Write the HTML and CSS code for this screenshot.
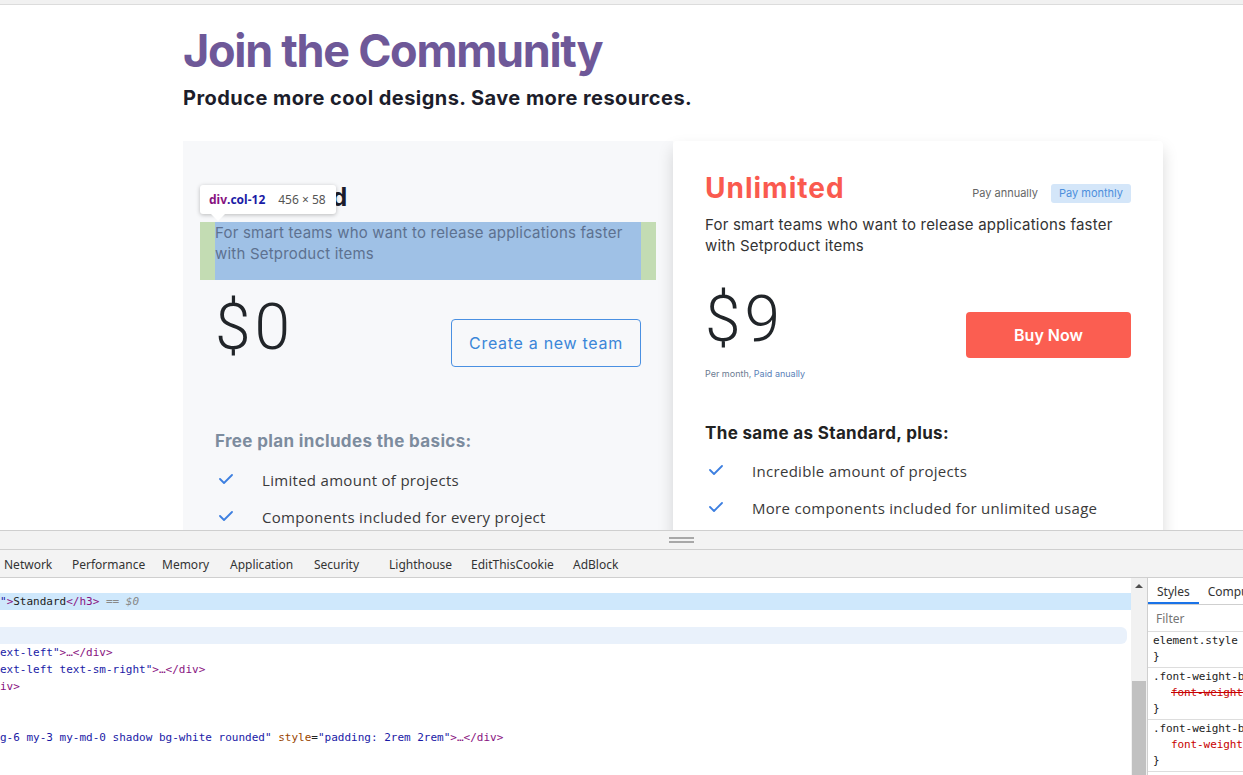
FILE: index.html
```html
<!DOCTYPE html>
<html lang="en">
<head>
<meta charset="utf-8">
<title>Join the Community</title>
<link rel="stylesheet" href="styles.css">
</head>
<body>
<div class="browser-top"></div>
<main class="page">
  <div class="container">
    <h1 class="title">Join the Community</h1>
    <h2 class="subtitle">Produce more cool designs. Save more resources.</h2>
    <div class="plans">
      <section class="plan plan-free">
        <h3 class="plan-name plan-name-std">Standard</h3>
        <div class="hl"><p class="hl-content">For smart teams who want to release applications faster with Setproduct items</p></div>
        <div class="price-row price-row-free">
          <div class="price">$0</div>
          <button class="btn-outline">Create a new team</button>
        </div>
        <h4 class="features-title features-title-muted">Free plan includes the basics:</h4>
        <ul class="features features-free">
          <li><svg class="check" viewBox="0 0 14 10" width="14" height="10"><polyline points="1,5 5,9 13,1" fill="none" stroke="#3d7fe0" stroke-width="1.8" stroke-linecap="round" stroke-linejoin="round"/></svg><span>Limited amount of projects</span></li>
          <li><svg class="check" viewBox="0 0 14 10" width="14" height="10"><polyline points="1,5 5,9 13,1" fill="none" stroke="#3d7fe0" stroke-width="1.8" stroke-linecap="round" stroke-linejoin="round"/></svg><span>Components included for every project</span></li>
        </ul>
        <div class="tooltip">
          <span class="tt-tag">div</span><span class="tt-cls">.col-12</span><span class="tt-size">456 × 58</span>
        </div>
      </section>
      <section class="plan plan-pro">
        <div class="plan-head">
          <h3 class="plan-name plan-name-pro">Unlimited</h3>
          <div class="billing">
            <span class="bill-opt">Pay annually</span>
            <span class="bill-opt bill-active">Pay monthly</span>
          </div>
        </div>
        <p class="plan-desc">For smart teams who want to release applications faster with Setproduct items</p>
        <div class="price-row price-row-pro">
          <div class="price-col">
            <div class="price">$9</div>
            <div class="price-note">Per month, <span class="note-accent">Paid anually</span></div>
          </div>
          <button class="btn-buy">Buy Now</button>
        </div>
        <h4 class="features-title features-title-dark">The same as Standard, plus:</h4>
        <ul class="features features-pro">
          <li><svg class="check" viewBox="0 0 14 10" width="14" height="10"><polyline points="1,5 5,9 13,1" fill="none" stroke="#3d7fe0" stroke-width="1.8" stroke-linecap="round" stroke-linejoin="round"/></svg><span>Incredible amount of projects</span></li>
          <li><svg class="check" viewBox="0 0 14 10" width="14" height="10"><polyline points="1,5 5,9 13,1" fill="none" stroke="#3d7fe0" stroke-width="1.8" stroke-linecap="round" stroke-linejoin="round"/></svg><span>More components included for unlimited usage</span></li>
        </ul>
      </section>
    </div>
  </div>
</main>
<div class="devtools">
  <div class="resizer"><div class="grip"></div></div>
  <nav class="dt-tabs">
    <span>Network</span><span>Performance</span><span>Memory</span><span>Application</span><span>Security</span><span>Lighthouse</span><span>EditThisCookie</span><span>AdBlock</span>
  </nav>
  <div class="dt-body">
    <div class="dom">
      <div class="row row-selected"><span class="av">"</span><span class="br">&gt;</span>Standard<span class="tg">&lt;/h3&gt;</span> <span class="eq">== $0</span></div>
      <div class="row"></div>
      <div class="row row-hover"></div>
      <div class="row"><span class="av">ext-left"</span><span class="tg">&gt;…&lt;/div&gt;</span></div>
      <div class="row"><span class="av">ext-left text-sm-right"</span><span class="tg">&gt;…&lt;/div&gt;</span></div>
      <div class="row"><span class="tg">iv&gt;</span></div>
      <div class="row"></div>
      <div class="row"></div>
      <div class="row"><span class="av">g-6 my-3 my-md-0 shadow bg-white rounded"</span> <span class="an">style</span>=<span class="av">"padding: 2rem 2rem"</span><span class="tg">&gt;…&lt;/div&gt;</span></div>
    </div>
    <div class="scrollbar">
      <div class="sb-arrow"></div>
      <div class="sb-thumb"></div>
    </div>
    <aside class="styles-pane">
      <div class="sp-tabs"><span class="sp-tab sp-tab-active">Styles</span><span class="sp-tab">Computed</span></div>
      <div class="sp-filter">Filter</div>
      <div class="sp-rule"><div>element.style {</div><div>}</div></div>
      <div class="sp-rule"><div>.font-weight-bold {</div><div class="sp-prop sp-strike">font-weight: 700;</div><div>}</div></div>
      <div class="sp-rule"><div>.font-weight-bold {</div><div class="sp-prop">font-weight: 700;</div><div>}</div></div>
    </aside>
  </div>
</div>
</body>
</html>
```
FILE: styles.css
```css
* { box-sizing: border-box; }
html, body { margin: 0; height: 775px; overflow: hidden; background: #fff; }
body { font-family: Inter, "Noto Sans", sans-serif; color: #212529; }

.browser-top { height: 5px; background: #f1f1f1; border-bottom: 1px solid #dcdcdc; }

.page { height: 525px; overflow: hidden; }
.container { width: 980px; margin-left: 183px; }
.title { margin: 19px 0 0; font-size: 45px; line-height: 54px; font-weight: 700; color: #6e5898; letter-spacing: -1.3px; }
.subtitle { margin: 8px 0 0; font-size: 20px; line-height: 24px; font-weight: 700; color: #1c1d2b; letter-spacing: 0.45px; }

.plans { display: flex; margin-top: 31px; }
.plan { position: relative; width: 490px; min-height: 430px; padding: 32px; }
.plan-free { background: #f7f8fa; }
.plan-pro { background: #fff; border-radius: 4px; box-shadow: 0 8px 16px rgba(0,0,0,.15); }

.plan-name { margin: 0; font-weight: 700; }
.plan-name-std { margin-top: 9px; font-size: 25px; line-height: 30px; color: #1c1d2b; letter-spacing: 3px; }
.plan-head { display: flex; justify-content: space-between; align-items: flex-end; height: 30px; }
.plan-name-pro { font-size: 28px; line-height: 30px; color: #fa5a4f; letter-spacing: 1px; }
.billing { display: flex; align-items: center; gap: 13px; }
.bill-opt { font-size: 11px; line-height: 19px; color: #666; }
.bill-active { background: #d4e6f9; color: #4d8fdc; padding: 0 8px; border-radius: 3px; }

.hl { margin: 10px -15px 0; padding: 0 15px; background: #c3dcb3; }
.hl-content { margin: 0; height: 58px; background: #9fc1e6; color: #5d7190; font-size: 15px; line-height: 21px; letter-spacing: 0.2px; }
.plan-desc { margin: 10.5px 0 0; color: #333; font-size: 15px; line-height: 21px; letter-spacing: 0.2px; }

.price-row { display: flex; justify-content: space-between; align-items: flex-start; }
.price-row-free { margin-top: 16px; }
.price-row-pro { margin-top: 32.5px; }
.price { font-family: Roboto, sans-serif; font-weight: 300; font-size: 64px; line-height: 64px; color: #212529; letter-spacing: 4px; }
.price-note { margin-top: 16px; font-size: 9px; line-height: 12px; color: #6c7b91; }
.note-accent { color: #5b82b8; }
.btn-outline { margin-top: 23px; width: 190px; height: 48px; border: 1px solid #4a90e2; border-radius: 4px; background: transparent; color: #3b86d8; font-family: Inter, sans-serif; font-size: 16px; font-weight: 400; letter-spacing: 0.7px; }
.btn-buy { margin-top: 24px; width: 165px; height: 46px; border: 0; border-radius: 4px; background: #fb5e51; color: #fff; font-family: Inter, sans-serif; font-size: 16px; font-weight: 600; }

.features-title { margin: 0; font-size: 17px; line-height: 24px; font-weight: 700; letter-spacing: 0.35px; }
.features-title-muted { margin-top: 62px; color: #7d8c9e; }
.features-title-dark { margin-top: 41px; color: #222; }
.features { list-style: none; margin: 0; padding: 0; }
.features-free { margin-top: 8.5px; }
.features-pro { margin-top: 7.5px; }
.features li { display: flex; align-items: center; height: 37px; font-family: "Open Sans", sans-serif; font-size: 15px; color: #3a3a3a; letter-spacing: 0.3px; }
.check { margin: 0 29px 2px 4px; flex: none; }

.tooltip { position: absolute; left: 17px; top: 44px; width: 136px; height: 29px; background: #fff; border-radius: 3px; box-shadow: 0 1px 4px rgba(0,0,0,.25); display: flex; align-items: center; padding-left: 9px; font-family: "Noto Sans", sans-serif; font-size: 12px; }
.tooltip::after { content: ""; position: absolute; left: 10px; bottom: -7px; border-left: 8px solid transparent; border-right: 8px solid transparent; border-top: 8px solid #fff; }
.tt-tag { color: #881280; font-weight: 700; }
.tt-cls { color: #1a1aa6; font-weight: 700; }
.tt-size { margin-left: 13px; color: #555; }

.devtools { height: 245px; display: flex; flex-direction: column; background: #fff; }
.resizer { height: 20px; background: #f3f3f3; border-top: 1px solid #cfcfcf; border-bottom: 1px solid #cfcfcf; padding-left: 669px; display: flex; align-items: center; }
.grip { width: 25px; height: 6px; border-top: 2px solid #a8a8a8; border-bottom: 2px solid #a8a8a8; }
.dt-tabs { height: 28px; background: #f3f3f3; border-bottom: 1px solid #cfcfcf; display: grid; grid-template-columns: 68px 90px 68px 84px 75px 82px 102px auto; align-items: center; padding-left: 4px; padding-top: 1px; font-family: "Noto Sans", sans-serif; font-size: 12px; color: #333; }
.dt-body { flex: 1; display: flex; min-height: 0; }
.dom { flex: 1; padding-top: 15px; font-family: "DejaVu Sans Mono", monospace; font-size: 11px; color: #222; }
.row { height: 17px; line-height: 17px; white-space: pre; }
.row-selected { background: #cfe8fc; }
.row-hover { background: #e9f1fb; margin-right: 4px; border-radius: 0 6px 6px 0; }
.av { color: #1a1aa6; }
.an { color: #994500; }
.tg, .br { color: #881280; }
.eq { color: #888; font-style: italic; }
.scrollbar { width: 16px; background: #f1f1f1; display: flex; flex-direction: column; align-items: center; }
.sb-arrow { margin-top: 6px; width: 0; height: 0; border-left: 4px solid transparent; border-right: 4px solid transparent; border-bottom: 4px solid #505050; }
.sb-thumb { margin-top: 93px; width: 14px; flex: 1; background: #c1c1c1; }
.styles-pane { width: 96px; border-left: 1px solid #cfcfcf; overflow: hidden; }
.sp-tabs { height: 27px; display: flex; border-bottom: 1px solid #cfcfcf; font-family: "Noto Sans", sans-serif; font-size: 12px; color: #333; white-space: nowrap; }
.sp-tab { padding: 5px 9px 0; }
.sp-tab-active { width: 51px; border-bottom: 2px solid #1a73e8; }
.sp-tab + .sp-tab { padding-left: 9px; }
.sp-filter { height: 27px; line-height: 27px; padding-left: 8px; border-bottom: 1px solid #ddd; font-family: "Noto Sans", sans-serif; font-size: 12px; color: #757575; }
.sp-rule { padding: 1px 0 2px 5px; border-bottom: 1px solid #ddd; font-family: "DejaVu Sans Mono", monospace; font-size: 11px; letter-spacing: -0.1px; line-height: 16px; color: #222; white-space: nowrap; }
.sp-prop { padding-left: 18px; color: #c80000; }
.sp-strike { text-decoration: line-through; }
```
